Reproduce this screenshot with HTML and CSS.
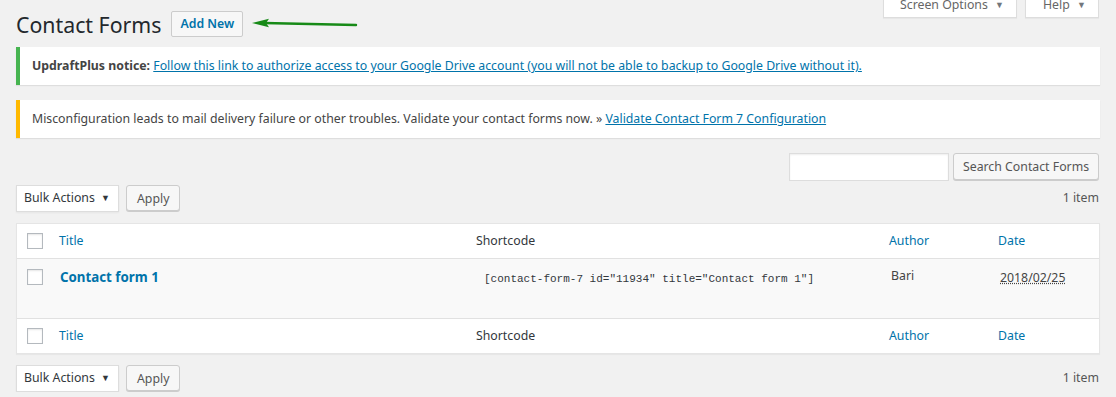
FILE: index.html
```html
<!DOCTYPE html>
<html lang="en">
<head>
<meta charset="utf-8">
<title>Contact Forms</title>
<link rel="stylesheet" href="styles.css">
</head>
<body>
<div class="wrap">
  <div class="page-head">
    <h1 class="page-title">Contact Forms</h1>
    <a class="btn-add" href="#">Add New</a>
    <svg class="arrow" width="106" height="10" viewBox="0 0 106 10" aria-hidden="true">
      <path d="M104 7 L12 5" stroke="#178a17" stroke-width="2.4" stroke-linecap="round" fill="none"/>
      <path d="M0 5 L17 0.8 L14 5 L17 9.2 Z" fill="#178a17"/>
    </svg>
    <div class="screen-meta">
      <button class="meta-tab meta-tab-options">Screen Options <span class="tri">▼</span></button>
      <button class="meta-tab meta-tab-help">Help <span class="tri">▼</span></button>
    </div>
  </div>

  <div class="notice notice-success">
    <p><strong>UpdraftPlus notice:</strong> <a href="#">Follow this link to authorize access to your Google Drive account (you will not be able to backup to Google Drive without it).</a></p>
  </div>

  <div class="notice notice-warning">
    <p>Misconfiguration leads to mail delivery failure or other troubles. Validate your contact forms now. » <a href="#">Validate Contact Form 7 Configuration</a></p>
  </div>

  <div class="search-row">
    <input class="search-input" type="search" aria-label="Search">
    <button class="btn">Search Contact Forms</button>
  </div>

  <div class="tablenav tablenav-top">
    <div class="actions">
      <span class="select">Bulk Actions <span class="tri">▼</span></span>
      <button class="btn btn-apply">Apply</button>
    </div>
    <span class="count">1 item</span>
  </div>

  <table class="list">
    <colgroup>
      <col class="c-cb"><col class="c-title"><col class="c-code"><col class="c-author"><col class="c-date">
    </colgroup>
    <thead>
      <tr>
        <th class="cb"><span class="checkbox"></span></th>
        <th><a href="#">Title</a></th>
        <th>Shortcode</th>
        <th><a href="#">Author</a></th>
        <th><a href="#">Date</a></th>
      </tr>
    </thead>
    <tbody>
      <tr>
        <td class="cb"><span class="checkbox"></span></td>
        <td class="row-title"><a href="#">Contact form 1</a></td>
        <td><span class="shortcode">[contact-form-7 id="11934" title="Contact form 1"]</span></td>
        <td class="author">Bari</td>
        <td class="date"><abbr title="2018/02/25">2018/02/25</abbr></td>
      </tr>
    </tbody>
    <tfoot>
      <tr>
        <th class="cb"><span class="checkbox"></span></th>
        <th><a href="#">Title</a></th>
        <th>Shortcode</th>
        <th><a href="#">Author</a></th>
        <th><a href="#">Date</a></th>
      </tr>
    </tfoot>
  </table>

  <div class="tablenav tablenav-bottom">
    <div class="actions">
      <span class="select">Bulk Actions <span class="tri">▼</span></span>
      <button class="btn btn-apply">Apply</button>
    </div>
    <span class="count">1 item</span>
  </div>
</div>
</body>
</html>
```

FILE: styles.css
```css
* { box-sizing: border-box; }

html, body {
  margin: 0;
  padding: 0;
  background: #f1f1f1;
}

body {
  font-family: "Noto Sans", "Open Sans", sans-serif;
  font-size: 12.3px;
  line-height: 1.4;
  color: #444;
}

a { color: #0073aa; }

.wrap {
  padding: 0 16px;
  display: flex;
  flex-direction: column;
}

/* header */
.page-head {
  display: flex;
  align-items: center;
  height: 37px;
}

.page-title {
  margin: 13px 0 0 0;
  font-size: 21.3px;
  font-weight: 400;
  line-height: 26px;
  color: #23282d;
}

.btn-add {
  margin: 11px 0 0 10px;
  height: 26px;
  padding: 0 8px;
  display: inline-flex;
  align-items: center;
  border: 1px solid #ccc;
  border-radius: 2px;
  background: #f7f7f7;
  color: #0073aa;
  font-weight: 600;
  font-size: 12.3px;
  text-decoration: none;
  white-space: nowrap;
}

.arrow {
  margin: 9px 0 0 9px;
}

.screen-meta {
  margin-left: auto;
  align-self: flex-start;
  display: flex;
  gap: 8px;
  margin-right: 1px;
}

.meta-tab {
  font-family: inherit;
  font-size: 12.3px;
  color: #666;
  background: #fff;
  border: 1px solid #ddd;
  border-top: none;
  box-shadow: 0 1px 1px rgba(0,0,0,.04);
  height: 27px;
  margin-top: -9px;
  line-height: 25px;
  padding: 0 10px 0 16px;
  white-space: nowrap;
  text-align: left;
}
.meta-tab-options { width: 134px; }
.meta-tab-help { width: 74px; padding-left: 17px; }

.tri {
  font-size: 9px;
  margin-left: 4px;
  color: #72777c;
  vertical-align: 1px;
}

/* notices */
.notice {
  background: #fff;
  border-left: 4px solid #fff;
  box-shadow: 0 1px 1px rgba(0,0,0,.08);
  height: 38px;
  padding: 0 12px;
  display: flex;
  align-items: center;
}
.notice p { margin: 0; }
.notice strong { font-weight: 700; color: #444; }

.notice-success {
  border-left-color: #46b450;
  margin-top: 10px;
}
.notice-warning {
  border-left-color: #ffb900;
  margin-top: 15px;
}

/* search */
.search-row {
  margin-top: 15px;
  display: flex;
  justify-content: flex-end;
  gap: 4px;
  padding-right: 1px;
}

.search-input {
  width: 160px;
  height: 28px;
  border: 1px solid #ddd;
  box-shadow: inset 0 1px 2px rgba(0,0,0,.07);
  background: #fff;
  margin: 0;
}

.btn {
  font-family: inherit;
  font-size: 12.3px;
  color: #555;
  background: #f7f7f7;
  border: 1px solid #ccc;
  border-radius: 3px;
  box-shadow: 0 1px 0 #ccc;
  height: 27px;
  padding: 0 10px;
  margin: 0;
  white-space: nowrap;
}
.search-row .btn { width: 146px; height: 27px; padding: 0 6px; }

/* tablenav */
.tablenav {
  display: flex;
  justify-content: space-between;
  align-items: center;
  height: 28px;
}
.tablenav-top { margin-top: 3px; }
.tablenav-bottom { margin-top: 10px; }

.actions {
  display: flex;
  align-items: center;
  gap: 7px;
}

.select {
  width: 103px;
  height: 27px;
  display: inline-flex;
  align-items: center;
  justify-content: space-between;
  padding: 0 8px 0 7px;
  background: #fff;
  border: 1px solid #ddd;
  box-shadow: 0 1px 2px rgba(0,0,0,.05);
  color: #32373c;
  white-space: nowrap;
}
.select .tri { color: #32373c; margin: 0; }

.btn-apply { width: 54px; height: 26px; }

.count {
  color: #555;
  padding-right: 1px;
}

/* table */
.list {
  margin-top: 11px;
  width: 100%;
  table-layout: fixed;
  border-spacing: 0;
  border: 1px solid #e5e5e5;
  box-shadow: 0 1px 1px rgba(0,0,0,.04);
  background: #fff;
}

.c-cb { width: 32px; }
.c-title { width: 417px; }
.c-code { width: 413px; }
.c-author { width: 109px; }
.c-date { width: 111px; }

.list th {
  text-align: left;
  font-weight: 400;
  height: 34px;
  padding: 0 10px;
  vertical-align: middle;
  color: #32373c;
  font-size: 12.3px;
}
.list th a { text-decoration: none; }
.list thead th { border-bottom: 1px solid #e1e1e1; height: 35px; }
.list tfoot th { border-top: 1px solid #e1e1e1; height: 35px; }

.list th.cb, .list td.cb {
  padding: 0 0 0 10px;
}

.checkbox {
  display: block;
  width: 16px;
  height: 16px;
  border: 1px solid #b4b9be;
  background: #fff;
  box-shadow: inset 0 1px 2px rgba(0,0,0,.1);
}

.list tbody td {
  background: #f9f9f9;
  height: 59px;
  vertical-align: top;
  padding: 9px 10px 0;
}
.list tbody td.cb { padding-top: 10px; }

.row-title a {
  font-size: 13.3px;
  font-weight: 700;
  text-decoration: none;
  line-height: 19px;
  padding-left: 1px;
}

.shortcode {
  display: inline-block;
  font-family: "Liberation Mono", "DejaVu Sans Mono", monospace;
  font-size: 11px;
  color: #32373c;
  padding: 3px 8px 0;
  line-height: 16px;
  white-space: nowrap;
}

.author { color: #444; line-height: 16px; padding-left: 12px !important; }

.date abbr {
  text-decoration: underline dotted;
  color: #444;
  padding-left: 2px;
  line-height: 19px;
}
```
